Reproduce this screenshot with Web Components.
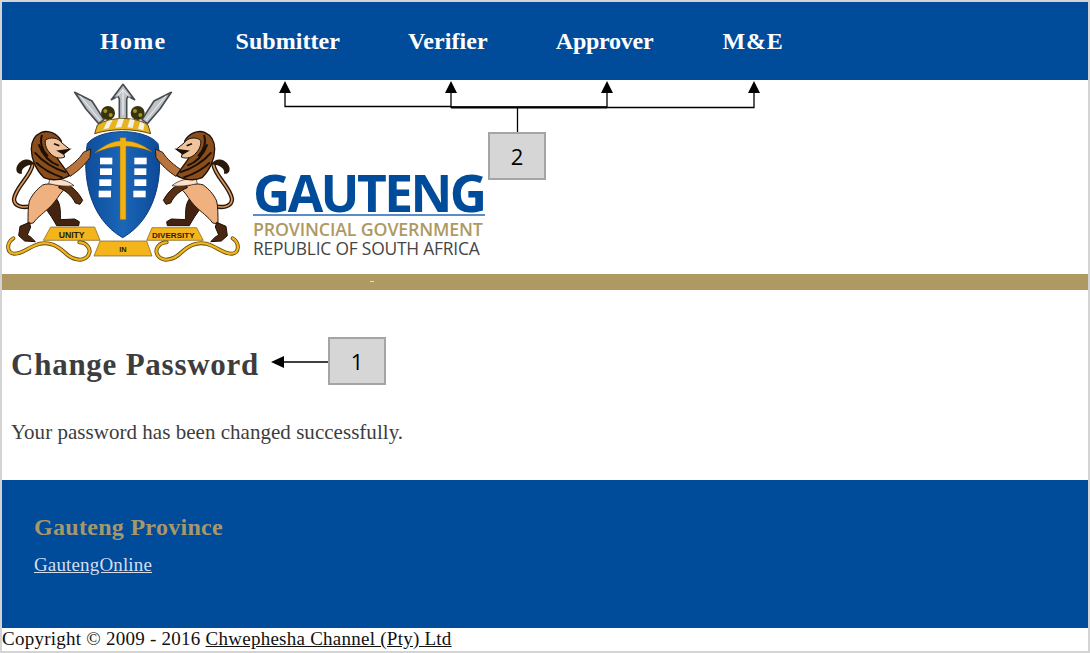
<!DOCTYPE html>
<html lang="en">
<head>
<meta charset="utf-8">
<title>Change Password</title>
<style>
  html, body { margin: 0; padding: 0; background: #fff; }
</style>
</head>
<body>
<gp-page>
  <gp-nav>
    <gp-nav-link style="letter-spacing:1.3px;margin-right:1px">Home</gp-nav-link>
    <gp-nav-link style="letter-spacing:.05px">Submitter</gp-nav-link>
    <gp-nav-link style="letter-spacing:.1px">Verifier</gp-nav-link>
    <gp-nav-link style="letter-spacing:-.25px;margin-right:1px">Approver</gp-nav-link>
    <gp-nav-link style="letter-spacing:.9px">M&amp;E</gp-nav-link>
  </gp-nav>
  <gp-header></gp-header>
  <gp-content heading="Change Password">Your password has been changed successfully.</gp-content>
  <gp-footer heading="Gauteng Province" link="GautengOnline"></gp-footer>
  <gp-copyright></gp-copyright>
  <gp-callouts></gp-callouts>
</gp-page>

<script>
const SERIF = `"Liberation Serif", "Times New Roman", serif`;

class GpPage extends HTMLElement {
  constructor() {
    super();
    this.attachShadow({ mode: 'open' });
    this.shadowRoot.innerHTML = `
      <style>
        :host {
          display: flex;
          flex-direction: column;
          position: relative;
          box-sizing: border-box;
          width: 1090px;
          height: 653px;
          border: 2px solid #d4d4d4;
          background: #fff;
          overflow: hidden;
          font-family: ${SERIF};
        }
      </style>
      <slot></slot>
    `;
  }
}

class GpNav extends HTMLElement {
  constructor() {
    super();
    this.attachShadow({ mode: 'open' });
    this.shadowRoot.innerHTML = `
      <style>
        :host {
          display: flex;
          align-items: center;
          gap: 68px;
          height: 78px;
          flex: none;
          padding-left: 98px;
          background: #004c9b;
        }
      </style>
      <slot></slot>
    `;
  }
}

class GpNavLink extends HTMLElement {
  constructor() {
    super();
    this.attachShadow({ mode: 'open' });
    this.shadowRoot.innerHTML = `
      <style>
        :host {
          display: block;
          color: #fff;
          font-size: 24px;
          font-weight: bold;
          line-height: 28px;
        }
      </style>
      <slot></slot>
    `;
  }
}

class GpCrest extends HTMLElement {
  constructor() {
    super();
    this.attachShadow({ mode: 'open' });
    const lion = `
      <!-- tail -->
      <path d="M98 268 C92 305 48 335 42 372 C42 396 72 402 104 390" fill="none" stroke="#2a180a" stroke-width="13" stroke-linecap="round"/>
      <path d="M98 268 C92 305 48 335 42 372 C42 396 72 402 104 390" fill="none" stroke="#d99a64" stroke-width="5" stroke-linecap="round"/>
      <path d="M104 268 C92 246 60 250 50 276 C46 292 56 298 66 296 C62 282 76 270 104 268 Z" fill="#2a180a"/>
      <!-- far hind leg -->
      <path d="M132 396 L170 372 C184 390 180 416 182 434 L224 432 L238 440 L236 452 L170 452 C160 434 148 414 132 396 Z" fill="#43230f" stroke="#1d1008" stroke-width="3"/>
      <!-- near hind leg and belly -->
      <path d="M128 330 C150 322 182 330 190 346 C176 360 170 376 154 392 C134 412 112 426 100 444 L84 446 C84 420 84 396 88 378 C98 356 112 342 128 330 Z" fill="#eeb17f" stroke="#2a180a" stroke-width="3"/>
      <path d="M88 442 L60 454 L56 482 L74 498 L106 500 L92 486 L82 480 L92 456 Z" fill="#4a2710" stroke="#1d1008" stroke-width="3"/>
      <!-- raised lower arm -->
      <path d="M186 322 C214 330 234 350 248 376 L240 388 L226 384 C216 362 196 346 176 338 Z" fill="#5a3014" stroke="#1d1008" stroke-width="3"/>
      <path d="M150 310 C176 310 204 316 222 332 C200 336 172 332 146 326 Z" fill="#fbdfc6" stroke="#2a180a" stroke-width="2"/>
      <!-- upper arm -->
      <path d="M192 286 C214 272 238 252 250 232 L272 222 L270 248 C254 270 230 292 210 304 Z" fill="#b8743c" stroke="#2a180a" stroke-width="3"/>
      <!-- mane -->
      <path d="M124 172 C146 164 172 176 184 198 L172 250 C184 268 198 284 208 302 C186 316 152 318 132 308 C108 286 94 252 94 222 C94 198 106 180 124 172 Z" fill="#8a4e1c" stroke="#20120a" stroke-width="4"/>
      <path d="M104 232 C130 262 160 280 198 292 M108 262 C130 284 154 296 188 308 M116 208 C128 240 148 262 176 272 M126 180 C118 204 128 230 144 244" fill="none" stroke="#1b0f06" stroke-width="6"/>
      <!-- face -->
      <path d="M136 196 C150 184 176 188 186 204 L208 222 L190 232 L194 246 C176 254 160 246 150 234 C140 224 134 210 136 196 Z" fill="#efc39c" stroke="#20120a" stroke-width="3"/>
      <path d="M162 206 L178 212 M176 228 L206 224 L190 236 Z" stroke="#1b0f06" stroke-width="5" fill="#1b0f06"/>`;
    const scroll = `M40 490 C18 504 20 534 42 536 C66 538 84 516 120 506 C150 500 172 512 196 534 C214 552 248 564 264 542 C278 522 258 502 238 502`;
    this.shadowRoot.innerHTML = `
      <style>
        :host { display: block; flex: none; width: 250px; height: 194px; }
        svg { display: block; }
        text { font-family: "Liberation Sans", Arial, sans-serif; font-weight: bold; fill: #2a1c08; }
      </style>
      <svg width="250" height="194" viewBox="0 15 750 582" aria-label="Coat of arms">
        <defs>
          <linearGradient id="sh" x1="0" y1="0" x2="1" y2="0">
            <stop offset="0" stop-color="#0e4d9c"/>
            <stop offset=".5" stop-color="#1b66b8"/>
            <stop offset="1" stop-color="#0c4a98"/>
          </linearGradient>
        </defs>
        <!-- spears -->
        <g stroke="#474c52" stroke-width="5" fill="#bfc3c6" stroke-linejoin="round">
          <path d="M369 28 L404 74 L384 64 L380 72 L380 134 L358 134 L358 72 L354 64 L334 74 Z"/>
          <path d="M224 52 L276 78 L312 134 L296 146 L258 102 Z"/>
          <path d="M514 52 L462 78 L426 134 L442 146 L480 102 Z"/>
        </g>
        <path d="M369 44 L390 68 M369 44 L348 68 M369 44 V120 M240 62 L300 136 M498 62 L438 136" stroke="#f2f3f4" stroke-width="3" fill="none"/>
        <!-- crown -->
        <circle cx="324" cy="114" r="21" fill="#37330f"/>
        <circle cx="413" cy="114" r="21" fill="#37330f"/>
        <circle cx="316" cy="108" r="6" fill="#a6921c"/>
        <circle cx="332" cy="120" r="6" fill="#a6921c"/>
        <circle cx="405" cy="108" r="6" fill="#a6921c"/>
        <circle cx="421" cy="120" r="6" fill="#a6921c"/>
        <path d="M292 150 C330 124 408 124 444 150 L452 176 C400 160 334 160 284 176 Z" fill="#e8b41e" stroke="#5d4c14" stroke-width="3"/>
        <path d="M310 163 L322 138 L338 134 L326 160 Z M346 158 L356 131 L372 131 L364 157 Z M382 157 L390 132 L404 135 L398 159 Z M414 161 L420 140 L434 146 L430 166 Z" fill="#f4f1e8"/>
        <!-- shield -->
        <path d="M262 206 C300 158 436 158 474 206 C490 300 470 430 368 488 C266 430 246 300 262 206 Z" fill="url(#sh)" stroke="#0a3a78" stroke-width="3"/>
        <!-- pick -->
        <path d="M284 234 C320 204 346 198 360 198 L360 188 L378 188 L378 198 C396 198 424 206 456 230 C424 218 396 214 378 214 L378 434 L360 434 L360 214 C344 214 316 220 284 234 Z" fill="#f2b211" stroke="#8a6a10" stroke-width="1.5"/>
        <g fill="#fff">
          <rect x="300" y="248" width="37" height="20"/><rect x="300" y="280" width="36" height="20"/>
          <rect x="298" y="313" width="36" height="20"/><rect x="296" y="347" width="37" height="20"/>
          <rect x="403" y="248" width="37" height="20"/><rect x="403" y="280" width="36" height="20"/>
          <rect x="403" y="313" width="36" height="20"/><rect x="400" y="347" width="37" height="20"/>
        </g>
        <!-- lions -->
        <g>${lion}</g>
        <g transform="translate(738 0) scale(-1 1)">${lion}</g>
        <!-- scroll -->
        <g fill="none" stroke-linecap="round">
          <path d="${scroll}" stroke="#5d4c14" stroke-width="12"/>
          <path d="${scroll}" stroke="#f3b41c" stroke-width="7"/>
          <g transform="translate(738 0) scale(-1 1)">
            <path d="${scroll}" stroke="#5d4c14" stroke-width="12"/>
            <path d="${scroll}" stroke="#f3b41c" stroke-width="7"/>
          </g>
        </g>
        <g fill="#f3b41c" stroke="#7a5b10" stroke-width="2">
          <path d="M152 456 L284 456 L300 496 L130 496 Z"/>
          <path d="M456 458 L590 458 L610 496 L440 496 Z"/>
          <path d="M300 498 L440 498 L456 543 L282 543 Z"/>
        </g>
        <text x="215" y="488" font-size="25" text-anchor="middle" textLength="78" lengthAdjust="spacingAndGlyphs">UNITY</text>
        <text x="520" y="490" font-size="22" text-anchor="middle" textLength="128" lengthAdjust="spacingAndGlyphs">DIVERSITY</text>
        <text x="369" y="530" font-size="22" text-anchor="middle">IN</text>
      </svg>
    `;
  }
}

class GpWordmark extends HTMLElement {
  constructor() {
    super();
    this.attachShadow({ mode: 'open' });
    this.shadowRoot.innerHTML = `
      <style>
        :host {
          display: flex;
          flex-direction: column;
          flex: none;
          width: 232px;
          font-family: "Open Sans", "Liberation Sans", sans-serif;
          white-space: nowrap;
        }
        .name {
          color: #004c9b;
          font-size: 51.5px;
          font-weight: 700;
          line-height: 41px;
          letter-spacing: -2.6px;
          height: 41px;
        }
        .rule { height: 2px; background: #5a8cc8; margin-top: 1px; }
        .prov {
          color: #ae9962;
          font-size: 17.8px;
          font-weight: 600;
          line-height: 18px;
          margin-top: 4px;
          letter-spacing: -0.15px;
        }
        .rep {
          color: #454545;
          font-size: 17.4px;
          line-height: 18px;
          margin-top: 1px;
          letter-spacing: -0.2px;
        }
      </style>
      <div class="name">GAUTENG</div>
      <div class="rule"></div>
      <div class="prov">PROVINCIAL GOVERNMENT</div>
      <div class="rep">REPUBLIC OF SOUTH AFRICA</div>
    `;
  }
}

class GpHeader extends HTMLElement {
  constructor() {
    super();
    this.attachShadow({ mode: 'open' });
    this.shadowRoot.innerHTML = `
      <style>
        :host { display: block; flex: none; position: relative; }
        .row {
          display: flex;
          align-items: flex-start;
          height: 194px;
          margin-left: -2px;
          background: #fff;
        }
        gp-wordmark { margin: 92px 0 0 3px; }
        .bar { height: 16px; background: #ae9962; position: relative; }
        .bar i {
          position: absolute;
          left: 368px;
          top: 7px;
          width: 4px;
          height: 1px;
          background: #e8e0c8;
        }
      </style>
      <div class="row">
        <gp-crest></gp-crest>
        <gp-wordmark></gp-wordmark>
      </div>
      <div class="bar"><i></i></div>
    `;
  }
}

class GpContent extends HTMLElement {
  constructor() {
    super();
    this.attachShadow({ mode: 'open' });
    this.shadowRoot.innerHTML = `
      <style>
        :host {
          display: block;
          flex: none;
          box-sizing: border-box;
          height: 190px;
          padding: 57px 0 0 9px;
          color: #3d3d3d;
        }
        h1 {
          margin: 0;
          font-size: 31px;
          font-weight: bold;
          line-height: 36px;
          letter-spacing: 0.75px;
        }
        p {
          margin: 37px 0 0;
          font-size: 21px;
          line-height: 24px;
          letter-spacing: 0.03px;
        }
      </style>
      <h1>${this.getAttribute('heading')}</h1>
      <p><slot></slot></p>
    `;
  }
}

class GpFooter extends HTMLElement {
  constructor() {
    super();
    this.attachShadow({ mode: 'open' });
    this.shadowRoot.innerHTML = `
      <style>
        :host {
          display: block;
          flex: none;
          box-sizing: border-box;
          height: 148px;
          padding: 33px 0 0 32px;
          background: #004c9b;
        }
        h2 {
          margin: 0;
          color: #a79869;
          font-size: 24px;
          font-weight: bold;
          line-height: 28px;
          letter-spacing: 0.3px;
        }
        a {
          display: inline-block;
          margin-top: 13px;
          color: #d4deef;
          font-size: 19px;
          line-height: 21px;
          text-decoration: underline;
          letter-spacing: 0.15px;
        }
      </style>
      <h2>${this.getAttribute('heading')}</h2>
      <a>${this.getAttribute('link')}</a>
    `;
  }
}

class GpCopyright extends HTMLElement {
  constructor() {
    super();
    this.attachShadow({ mode: 'open' });
    this.shadowRoot.innerHTML = `
      <style>
        :host {
          display: block;
          flex: none;
          height: 23px;
          color: #111;
          font-size: 19px;
          line-height: 22px;
          white-space: nowrap;
          letter-spacing: 0.25px;
        }
        a { text-decoration: underline; }
      </style>
      Copyright © 2009 - 2016 <a>Chwephesha Channel (Pty) Ltd</a>
    `;
  }
}

// numbered callouts with arrows, drawn over the page
class GpCallouts extends HTMLElement {
  constructor() {
    super();
    this.attachShadow({ mode: 'open' });
    this.shadowRoot.innerHTML = `
      <style>
        :host { position: absolute; left: -2px; top: -2px; width: 1090px; height: 653px; pointer-events: none; }
        svg { position: absolute; left: 0; top: 0; }
        .box {
          position: absolute;
          box-sizing: border-box;
          display: flex;
          align-items: center;
          justify-content: center;
          width: 58px;
          height: 48px;
          background: #d6d6d6;
          border: 2px solid #a5a5a5;
          color: #000;
          font: 22px "Open Sans", "Liberation Sans", sans-serif;
        }
      </style>
      <svg width="1090" height="653" fill="#000">
        <g stroke="#000" fill="none" stroke-width="1.3">
          <path d="M285 92 V106.5 H451 M451 92 V107 H607 M607 92 V107.500 H754 V92 M517.500 108 V133"/>
          <path d="M451 107.500 H607" stroke-width="2"/>
          <path d="M280 362 H329"/>
        </g>
        <path d="M285 81 L279 93 H291 Z M451 81 L445 93 H457 Z M607 81 L601 93 H613 Z M754 81 L748 93 H760 Z M271 362 L284 356 V368 Z"/>
      </svg>
      <div class="box" style="left:488px;top:132px">2</div>
      <div class="box" style="left:328px;top:337px">1</div>
    `;
  }
}

customElements.define('gp-page', GpPage);
customElements.define('gp-nav', GpNav);
customElements.define('gp-nav-link', GpNavLink);
customElements.define('gp-crest', GpCrest);
customElements.define('gp-wordmark', GpWordmark);
customElements.define('gp-header', GpHeader);
customElements.define('gp-content', GpContent);
customElements.define('gp-footer', GpFooter);
customElements.define('gp-copyright', GpCopyright);
customElements.define('gp-callouts', GpCallouts);
</script>
</body>
</html>
